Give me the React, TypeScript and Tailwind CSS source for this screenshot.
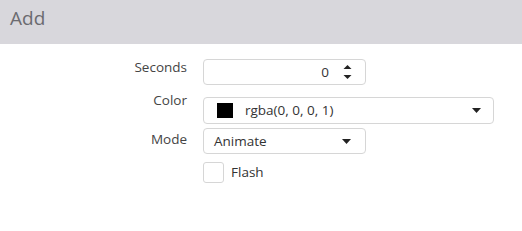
const FONT = { fontFamily: '"Open Sans", "Liberation Sans", sans-serif' };

function Caret() {
    return (
        <svg width="9" height="5" viewBox="0 0 9 5" className="shrink-0">
            <path d="M0 0 L9 0 L4.5 5 Z" fill="#222" />
        </svg>
    );
}

export default function App() {
    return (
        <div className="w-[522px] h-[231px] bg-white text-[13.5px] text-[#333]" style={FONT}>
            <div className="h-[44px] bg-[#d8d7dc] flex items-start pt-[4px] pl-[10px]">
                <h1 className="text-[19px] text-[#6b6b70] font-normal leading-[28px]">Add</h1>
            </div>

            <div className="pt-[13px] flex flex-col">
                {/* Seconds */}
                <div className="flex items-start">
                    <label className="w-[187px] text-right text-[#444] leading-[20px]">Seconds</label>
                    <div className="ml-[16px] mt-[2px] w-[163px] h-[26px] border border-[#d6d6d6] rounded-[4px] flex items-center justify-end pr-[13px] gap-[14px]">
                        <span>0</span>
                        <svg width="9" height="16" viewBox="0 0 9 16">
                            <path d="M0.5 5 L4.5 1 L8.5 5 Z" fill="#222" />
                            <path d="M0.5 11 L4.5 15 L8.5 11 Z" fill="#222" />
                        </svg>
                    </div>
                </div>

                {/* Color */}
                <div className="flex items-start mt-[5px]">
                    <label className="w-[187px] text-right text-[#444] leading-[20px]">Color</label>
                    <div className="ml-[16px] mt-[7px] w-[291px] h-[27px] border border-[#d6d6d6] rounded-[4px] flex items-center pl-[13px] pr-[12px]">
                        <span className="w-[16px] h-[15px] bg-black" />
                        <span className="ml-[12px] flex-1">rgba(0, 0, 0, 1)</span>
                        <Caret />
                    </div>
                </div>

                {/* Mode */}
                <div className="flex items-start mt-[4px]">
                    <label className="w-[187px] text-right pt-[1px] text-[#444] leading-[20px]">Mode</label>
                    <div className="ml-[16px] w-[163px] h-[26px] border border-[#d6d6d6] rounded-[4px] flex items-center pl-[10px] pr-[14px]">
                        <span className="flex-1">Animate</span>
                        <Caret />
                    </div>
                </div>

                {/* Flash */}
                <div className="flex items-center mt-[8px] ml-[203px]">
                    <span className="w-[21px] h-[21px] border border-[#d6d6d6] rounded-[3px]" />
                    <span className="ml-[7px]">Flash</span>
                </div>
            </div>
        </div>
    );
}
